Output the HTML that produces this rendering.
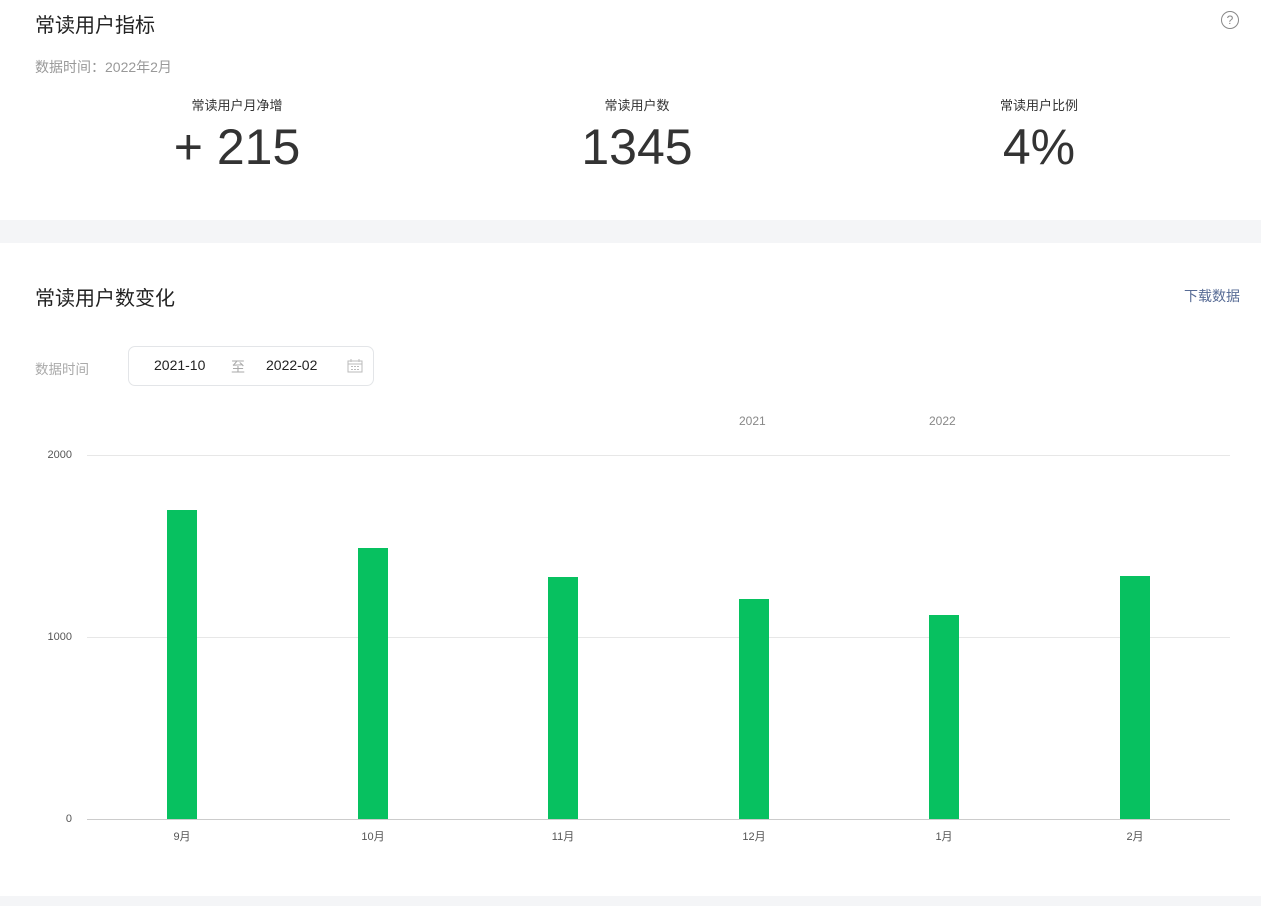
<!DOCTYPE html>
<html><head><meta charset="utf-8"><style>
*{margin:0;padding:0;box-sizing:border-box}
body{width:1261px;height:906px;background:#fff;font-family:"Liberation Sans","Noto Sans CJK SC",sans-serif;position:relative;overflow:hidden;color:#333}
.a{position:absolute;white-space:nowrap}
.bar{position:absolute;width:30px;background:#07c160;bottom:87px}
.g{position:absolute;left:87px;width:1143px;height:1px;background:#e7e7e7}
.yl{position:absolute;font-size:11px;color:#555;right:1189px}
.xl{position:absolute;font-size:11px;color:#555;top:828px;width:60px;text-align:center}
</style></head><body>
<div class="a" style="left:35px;top:9px;font-size:20px;color:#222">常读用户指标</div>
<div class="a" style="left:1221px;top:11px;width:18px;height:18px;border:1.3px solid #888;border-radius:50%;font-size:12px;color:#888;text-align:center;line-height:16px">?</div>
<div class="a" style="left:35px;top:57px;font-size:14px;color:#999">数据时间：2022年2月</div>
<div class="a" style="left:137px;width:200px;text-align:center;top:95px;font-size:13px">常读用户月净增</div>
<div class="a" style="left:137px;width:200px;text-align:center;top:118px;font-size:50px;color:#333">+ 215</div>
<div class="a" style="left:537px;width:200px;text-align:center;top:95px;font-size:13px">常读用户数</div>
<div class="a" style="left:537px;width:200px;text-align:center;top:118px;font-size:50px;color:#333">1345</div>
<div class="a" style="left:939px;width:200px;text-align:center;top:95px;font-size:13px">常读用户比例</div>
<div class="a" style="left:939px;width:200px;text-align:center;top:118px;font-size:50px;color:#333">4%</div>
<div class="a" style="left:0;top:220px;width:1261px;height:23px;background:#f4f5f7"></div>
<div class="a" style="left:35px;top:282px;font-size:20px;color:#222">常读用户数变化</div>
<div class="a" style="left:1184px;top:286px;font-size:14px;color:#576b95">下载数据</div>
<div class="a" style="left:35px;top:358px;font-size:13.5px;color:#aaa">数据时间</div>
<div class="a" style="left:128px;top:346px;width:246px;height:40px;border:1px solid #e3e5e8;border-radius:7px"></div>
<div class="a" style="left:154px;top:357px;font-size:14px;color:#222">2021-10</div>
<div class="a" style="left:231px;top:357px;font-size:14px;color:#aaa">至</div>
<div class="a" style="left:266px;top:357px;font-size:14px;color:#222">2022-02</div>
<svg class="a" style="left:347px;top:359px" width="16" height="14" viewBox="0 0 16 14"><rect x="1" y="2" width="14" height="11" fill="none" stroke="#bbb"/><line x1="1" y1="5" x2="15" y2="5" stroke="#bbb"/><line x1="4" y1="0" x2="4" y2="3" stroke="#bbb"/><line x1="12" y1="0" x2="12" y2="3" stroke="#bbb"/><g fill="#bbb"><rect x="4" y="7" width="2" height="1"/><rect x="7" y="7" width="2" height="1"/><rect x="10" y="7" width="2" height="1"/><rect x="4" y="10" width="2" height="1"/><rect x="7" y="10" width="2" height="1"/><rect x="10" y="10" width="2" height="1"/></g></svg>
<div class="a" style="left:739px;top:414px;font-size:12px;color:#888">2021</div>
<div class="a" style="left:929px;top:414px;font-size:12px;color:#888">2022</div>
<div class="g" style="top:455px"></div>
<div class="g" style="top:637px"></div>
<div class="g" style="top:819px;background:#ccc"></div>
<div class="yl" style="top:449px">2000</div>
<div class="yl" style="top:631px">1000</div>
<div class="yl" style="top:813px">0</div>
<div class="bar" style="left:167px;top:510px"></div>
<div class="bar" style="left:358px;top:548px"></div>
<div class="bar" style="left:548px;top:577px"></div>
<div class="bar" style="left:739px;top:599px"></div>
<div class="bar" style="left:929px;top:615px"></div>
<div class="bar" style="left:1120px;top:576px"></div>
<div class="xl" style="left:152px">9月</div>
<div class="xl" style="left:343px">10月</div>
<div class="xl" style="left:533px">11月</div>
<div class="xl" style="left:724px">12月</div>
<div class="xl" style="left:914px">1月</div>
<div class="xl" style="left:1105px">2月</div>
<div class="a" style="left:0;top:896px;width:1261px;height:10px;background:#f4f5f7"></div>
</body></html>
